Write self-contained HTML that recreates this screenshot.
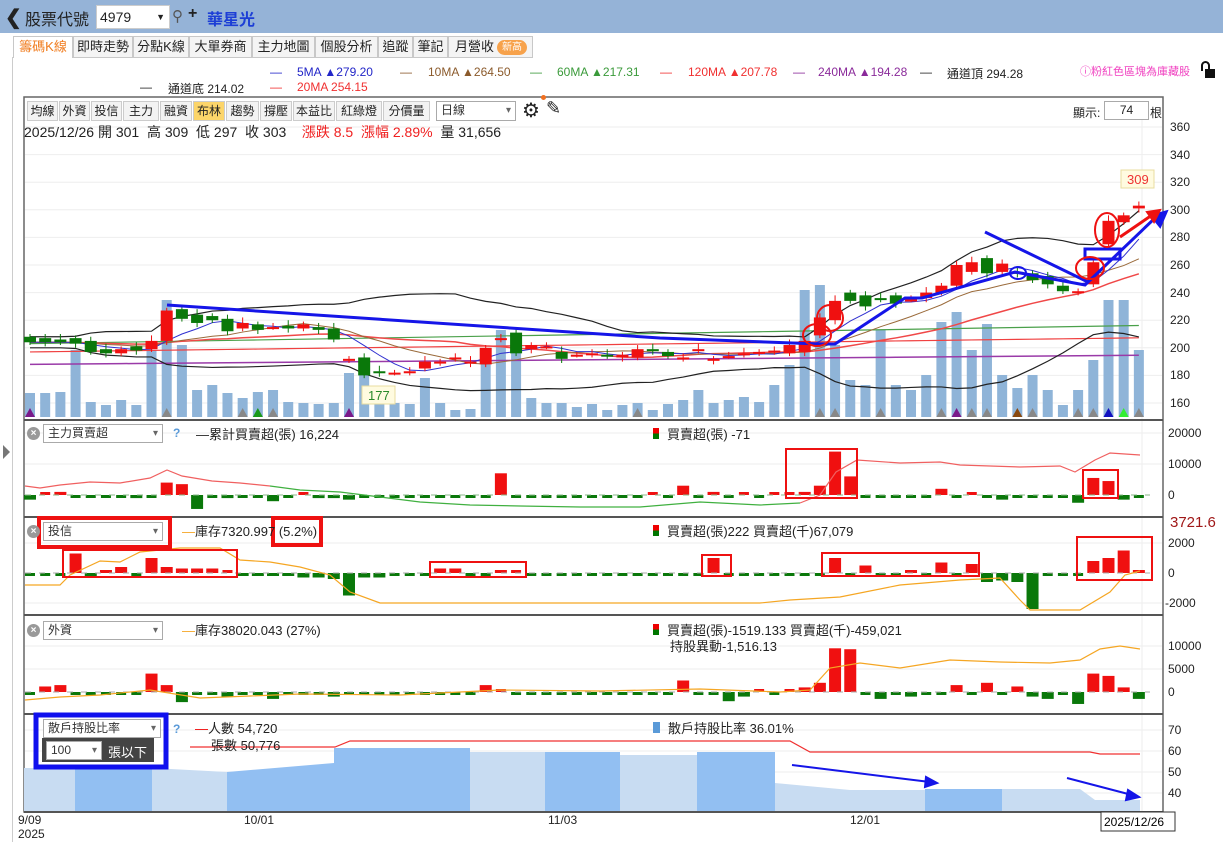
<!DOCTYPE html>
<html><head><meta charset="utf-8">
<style>
*{margin:0;padding:0;box-sizing:border-box}
body{width:1223px;height:842px;overflow:hidden;background:#fff;font-family:"Liberation Sans","Noto Sans CJK TC",sans-serif;font-size:12px;color:#222;position:relative}
.a{position:absolute;white-space:nowrap}
#hdr{position:absolute;left:0;top:0;width:1223px;height:33px;background:#95b3d7}
.tab{position:absolute;top:36px;height:22px;border:1px solid #c8c8c8;background:#f4f4f4;font-size:13px;line-height:20px;text-align:center;color:#222}
.btn{position:absolute;top:101px;height:20px;border:1px solid #ccc;background:#f3f3f3;font-size:12px;line-height:18px;text-align:center}
.sel{position:absolute;height:19px;border:1px solid #aaa;background:#fff;font-size:12px;line-height:17px;padding-left:4px;color:#333}
.sel:after{content:"▾";position:absolute;right:4px;top:0;font-size:10px;color:#666}
.xc{position:absolute;width:13px;height:13px;border-radius:50%;background:#999;color:#fff;font-size:10px;line-height:13px;text-align:center;font-weight:bold}
</style></head><body>
<div id="hdr"></div>
<div class="a" style="left:5px;top:5px;font-size:20px;font-weight:bold;color:#222">&#10094;</div>
<div class="a" style="left:25px;top:6px;font-size:16px;color:#222">股票代號</div>
<div class="a" style="left:96px;top:5px;width:74px;height:24px;background:#fff;border:1px solid #ccc;font-size:14px;line-height:22px;padding-left:3px">4979<span style="position:absolute;right:4px;font-size:9px">▼</span></div>
<div class="a" style="left:172px;top:7px;font-size:15px;color:#555">&#9906;</div>
<div class="a" style="left:188px;top:5px;font-size:16px;font-weight:bold">+</div>
<div class="a" style="left:207px;top:6px;font-size:16px;font-weight:bold;color:#1d3fd6">華星光</div>

<div class="tab" style="left:13px;width:60px;background:#fff;color:#f07b1c;border-bottom:none">籌碼K線</div>
<div class="tab" style="left:73px;width:60px">即時走勢</div>
<div class="tab" style="left:133px;width:56px">分點K線</div>
<div class="tab" style="left:189px;width:63px">大單券商</div>
<div class="tab" style="left:252px;width:63px">主力地圖</div>
<div class="tab" style="left:315px;width:63px">個股分析</div>
<div class="tab" style="left:378px;width:35px">追蹤</div>
<div class="tab" style="left:413px;width:35px">筆記</div>
<div class="tab" style="left:448px;width:85px;text-align:left;padding-left:6px">月營收<span style="display:inline-block;margin-left:3px;background:#f7a24b;color:#fff;border-radius:8px;font-size:10px;line-height:15px;padding:0 5px;vertical-align:1px">新高</span></div>
<div class="a" style="left:12px;top:57px;width:1px;height:785px;background:#ccc"></div>
<div class="a" style="left:3px;top:445px;width:0;height:0;border-left:7px solid #777;border-top:7px solid transparent;border-bottom:7px solid transparent"></div>

<div class="a" style="left:270px;top:65px;color:#2226c8">—</div><div class="a" style="left:297px;top:65px;color:#2226c8">5MA ▲279.20</div>
<div class="a" style="left:400px;top:65px;color:#8b5a2b">—</div><div class="a" style="left:428px;top:65px;color:#8b5a2b">10MA ▲264.50</div>
<div class="a" style="left:530px;top:65px;color:#3a9a3a">—</div><div class="a" style="left:557px;top:65px;color:#3a9a3a">60MA ▲217.31</div>
<div class="a" style="left:660px;top:65px;color:#f03030">—</div><div class="a" style="left:688px;top:65px;color:#f03030">120MA ▲207.78</div>
<div class="a" style="left:793px;top:65px;color:#8a2a9a">—</div><div class="a" style="left:818px;top:65px;color:#8a2a9a">240MA ▲194.28</div>
<div class="a" style="left:920px;top:65px">—</div><div class="a" style="left:947px;top:65px">通道頂 294.28</div>
<div class="a" style="left:140px;top:80px">—</div><div class="a" style="left:168px;top:80px">通道底 214.02</div>
<div class="a" style="left:270px;top:80px;color:#f03030">—</div><div class="a" style="left:297px;top:80px;color:#f03030">20MA 254.15</div>
<div class="a" style="left:1080px;top:63px;color:#f040c0;font-size:11px">ⓘ粉紅色區塊為庫藏股</div>
<div class="a" style="left:1205px;top:69px;width:10px;height:9px;background:#111"></div>
<div class="a" style="left:1201px;top:61px;width:9px;height:10px;border:2px solid #111;border-bottom:none;border-radius:5px 5px 0 0"></div>

<svg class="a" style="left:0;top:0" width="1223" height="842" id="sv">
<rect x="24" y="97" width="1139" height="715" fill="none" stroke="#666" stroke-width="1.5"/>
<g id="grid" stroke="#eee" stroke-width="1"></g>
<g id="p4a"></g>
<g id="main"></g>
<g stroke="#555" stroke-width="2"><line x1="24" y1="420" x2="1163" y2="420"/><line x1="24" y1="517" x2="1163" y2="517"/><line x1="24" y1="615" x2="1163" y2="615"/><line x1="24" y1="714" x2="1163" y2="714"/><line x1="24" y1="812" x2="1163" y2="812"/></g>
<g fill="none" stroke="#1515e8" stroke-width="3">
<polyline points="167,305 660,338 820,344 835,344 905,298 922,298 1015,272 1085,285 1155,218"/>
<line x1="985" y1="232" x2="1088" y2="282"/>
<rect x="1085" y="249" width="35" height="10"/>
<ellipse cx="1018" cy="273" rx="8" ry="6" stroke-width="2"/>
<polygon points="1166,212 1152,216 1160,226" fill="#1515e8"/>
</g>
<g fill="none" stroke="#ee1111" stroke-width="2">
<ellipse cx="817" cy="335" rx="14" ry="11"/><ellipse cx="830" cy="318" rx="13" ry="13"/>
<ellipse cx="1107" cy="230" rx="12" ry="17"/><ellipse cx="1090" cy="268" rx="14" ry="11"/>
<line x1="1120" y1="237" x2="1155" y2="213" stroke-width="3"/><polygon points="1160,210 1147,212 1154,222" fill="#ee1111"/>
</g>
<g fill="none" stroke="#ee1111" stroke-width="2">
<rect x="786" y="449" width="71" height="49"/><rect x="1083" y="470" width="35" height="28"/>
<rect x="39" y="518" width="131" height="29" stroke-width="4"/><rect x="273" y="518" width="48" height="27" stroke-width="4"/>
<rect x="63" y="550" width="174" height="27"/><rect x="430" y="562" width="96" height="15"/><rect x="702" y="555" width="29" height="21"/>
<rect x="822" y="553" width="157" height="23"/><rect x="1077" y="537" width="75" height="43"/>
</g>
<g stroke="#1515e8" stroke-width="2" fill="#1515e8"><line x1="792" y1="765" x2="930" y2="782"/><polygon points="937,783 926,777 925,787"/><line x1="1067" y1="778" x2="1132" y2="795"/><polygon points="1139,797 1128,790 1126,800"/></g>
<rect x="36" y="715" width="130" height="52" fill="none" stroke="#1010ee" stroke-width="5"/>
<rect x="1121" y="170" width="33" height="18" fill="#fffbe0" stroke="#e8dca0"/><text x="1127" y="184" fill="#e33" font-size="13" font-family="Liberation Sans">309</text>
<rect x="362" y="386" width="33" height="18" fill="#fffbe0" stroke="#e8dca0"/><text x="368" y="400" fill="#2a8a2a" font-size="13" font-family="Liberation Sans">177</text>
<g font-family="Liberation Sans" font-size="12" fill="#222" id="ax">
<text x="1170" y="131">360</text><text x="1170" y="159">340</text><text x="1170" y="186">320</text><text x="1170" y="214">300</text><text x="1170" y="241">280</text><text x="1170" y="269">260</text><text x="1170" y="297">240</text><text x="1170" y="324">220</text><text x="1170" y="352">200</text><text x="1170" y="379">180</text><text x="1170" y="407">160</text>
<text x="1168" y="437">20000</text><text x="1168" y="468">10000</text><text x="1168" y="499">0</text>
<text x="1168" y="547">2000</text><text x="1168" y="577">0</text><text x="1165" y="607">-2000</text>
<text x="1168" y="650">10000</text><text x="1168" y="673">5000</text><text x="1168" y="696">0</text>
<text x="1168" y="734">70</text><text x="1168" y="755">60</text><text x="1168" y="776">50</text><text x="1168" y="797">40</text>
<text x="1170" y="527" font-size="15" fill="#a01818">3721.6</text>
<text x="18" y="824">9/09</text><text x="18" y="838">2025</text><text x="244" y="824">10/01</text><text x="548" y="824">11/03</text><text x="850" y="824">12/01</text>
</g>
<rect x="1101" y="812" width="74" height="19" fill="#fff" stroke="#333"/><text x="1104" y="826" font-family="Liberation Sans" font-size="12">2025/12/26</text>
</svg>

<div class="btn" style="left:27px;width:31px">均線</div><div class="btn" style="left:59px;width:31px">外資</div><div class="btn" style="left:91px;width:31px">投信</div><div class="btn" style="left:123px;width:36px">主力</div><div class="btn" style="left:160px;width:32px">融資</div><div class="btn" style="left:193px;width:32px;background:#fcd56a">布林</div><div class="btn" style="left:226px;width:33px">趨勢</div><div class="btn" style="left:260px;width:32px">撐壓</div><div class="btn" style="left:293px;width:42px">本益比</div><div class="btn" style="left:336px;width:46px">紅綠燈</div><div class="btn" style="left:383px;width:47px">分價量</div>
<div class="sel" style="left:436px;top:101px;width:80px;height:20px">日線</div>
<div class="a" style="left:522px;top:98px;font-size:20px">⚙</div><div class="a" style="left:541px;top:95px;width:5px;height:5px;border-radius:50%;background:#f07020"></div>
<div class="a" style="left:546px;top:98px;font-size:18px">✎</div>
<div class="a" style="left:1073px;top:104px">顯示:</div>
<div class="a" style="left:1104px;top:101px;width:45px;height:19px;border:1px solid #aaa;text-align:center;line-height:17px">74</div>
<div class="a" style="left:1150px;top:104px">根</div>
<div class="a" style="left:24px;top:122px;font-size:14px">2025/12/26 開 301&nbsp; 高 309&nbsp; 低 297&nbsp; 收 303&nbsp;&nbsp;&nbsp; <span style="color:#f02020">漲跌 8.5&nbsp; 漲幅 2.89%</span>&nbsp; 量 31,656</div>

<div class="xc" style="left:27px;top:427px">×</div><div class="sel" style="left:43px;top:424px;width:120px">主力買賣超</div>
<div class="a" style="left:173px;top:426px;color:#5a9ad8;font-weight:bold">?</div>
<div class="a" style="left:196px;top:424px;font-size:13px">—累計買賣超(張) 16,224</div>
<div class="a" style="left:653px;top:424px;font-size:13px"><span style="display:inline-block;width:6px;height:11px;background:linear-gradient(#e00 50%,#070 50%);margin-right:8px"></span>買賣超(張) -71</div>

<div class="xc" style="left:27px;top:525px">×</div><div class="sel" style="left:43px;top:522px;width:120px">投信</div>
<div class="a" style="left:182px;top:521px;font-size:13px"><span style="color:#f5a623">—</span>庫存7320.997 (5.2%)</div>
<div class="a" style="left:653px;top:521px;font-size:13px"><span style="display:inline-block;width:6px;height:11px;background:linear-gradient(#e00 50%,#070 50%);margin-right:8px"></span>買賣超(張)222 買賣超(千)67,079</div>

<div class="xc" style="left:27px;top:624px">×</div><div class="sel" style="left:43px;top:621px;width:120px">外資</div>
<div class="a" style="left:182px;top:620px;font-size:13px"><span style="color:#f5a623">—</span>庫存38020.043 (27%)</div>
<div class="a" style="left:653px;top:620px;font-size:13px"><span style="display:inline-block;width:6px;height:11px;background:linear-gradient(#e00 50%,#070 50%);margin-right:8px"></span>買賣超(張)-1519.133 買賣超(千)-459,021</div>
<div class="a" style="left:670px;top:636px;font-size:13px">持股異動-1,516.13</div>

<div class="sel" style="left:43px;top:719px;width:118px">散戶持股比率</div>
<div class="a" style="left:42px;top:738px;width:112px;height:24px;background:#444"></div>
<div class="sel" style="left:46px;top:741px;width:56px">100</div>
<div class="a" style="left:108px;top:742px;color:#fff;font-size:13px">張以下</div>
<div class="a" style="left:173px;top:722px;color:#5a9ad8;font-weight:bold">?</div>
<div class="a" style="left:195px;top:718px;font-size:13px"><span style="color:#e00">—</span>人數 54,720</div>
<div class="a" style="left:211px;top:735px;font-size:13px">張數 50,776</div>
<div class="a" style="left:653px;top:718px;font-size:13px"><span style="display:inline-block;width:7px;height:11px;background:#5a9ad8;margin-right:8px"></span>散戶持股比率 36.01%</div>

<script>
var NS="http://www.w3.org/2000/svg";
function el(p,t,a){var e=document.createElementNS(NS,t);for(var k in a)e.setAttribute(k,a[k]);p.appendChild(e);return e}
var g=document.getElementById('main'),gr=document.getElementById('grid'),p4=document.getElementById('p4a');
function X(i){return 30+i*15.19}
function Y(p){return 127+(360-p)*1.38}
[360,340,320,300,280,260,240,220,200,180,160].forEach(function(p){el(gr,'line',{x1:25,x2:1162,y1:Y(p),y2:Y(p)})});
[433,464,543,603,646,669,730,751,772,793].forEach(function(y){el(gr,'line',{x1:25,x2:1162,y1:y,y2:y})});
el(gr,'line',{x1:1142,x2:1142,y1:120,y2:812});
var D=[[208,204],[207,204],[206,204],[207,203],[205,197],[199,196],[196,199],[201,198],[199,205],[205,227],[228,221],[224,218],[223,220],[221,212],[214,218],[217,213],[215,215],[216,214],[214,217],[215,213],[214,206],[192,192],[193,180],[183,182],[182,182],[183,183],[185,190],[190,190],[192,193],[189,190],[188,200],[207,207],[211,196],[199,202],[201,201],[197,192],[195,195],[196,196],[195,194],[193,195],[193,199],[199,198],[197,194],[193,193],[198,199],[191,192],[194,194],[196,196],[196,197],[198,198],[196,202],[197,205],[209,222],[220,234],[240,234],[238,230],[236,235],[238,232],[235,235],[236,240],[240,245],[245,260],[255,262],[265,254],[255,261],[255,254],[254,249],[252,246],[245,241],[241,241],[246,262],[275,292],[291,296],[301,303]];
var V=[393,393,392,350,402,405,400,405,350,300,345,390,385,393,398,392,390,402,403,404,403,373,372,404,403,404,378,403,410,409,350,330,345,398,403,403,407,404,410,405,403,410,404,400,390,403,400,397,402,385,365,290,285,345,380,385,330,385,390,375,322,312,350,324,375,388,375,390,405,390,360,300,300,350];
V.forEach(function(v,i){el(g,'rect',{x:X(i)-5,y:v,width:10,height:417-v,fill:'#8fb4d8'})});
var tri={0:'#7a1a8a',9:'#888',21:'#7a1a8a',14:'#888',16:'#888',15:'#1a9a1a',40:'#888',52:'#888',53:'#888',56:'#888',61:'#7a1a8a',62:'#888',63:'#888',65:'#8a4a10',66:'#888',70:'#888',71:'#1010c0',72:'#33ee33',73:'#888',69:'#888',60:'#888'};
for(var k in tri){var x=X(+k);el(g,'polygon',{points:(x-5)+',417 '+(x+5)+',417 '+x+',408',fill:tri[k]})}
var C=D.map(function(d){return d[1]});
function ma(n,off){return C.map(function(c,i){var s=0,m=0;for(var j=i-n+1;j<=i;j++){s+=C[Math.max(0,j)];m++}return s/m+(off||0)})}
function line(arr,col,w,yf){el(g,'polyline',{points:arr.map(function(v,i){return X(i)+','+(yf?yf(v):Y(v))}).join(' '),fill:'none',stroke:col,'stroke-width':w||1})}
var m20=ma(20),sd=C.map(function(c,i){var s=0,n=0;for(var j=i-19;j<=i;j++){var d=C[Math.max(0,j)]-m20[i];s+=d*d;n++}return Math.sqrt(s/n)});
line(C.map(function(c,i){return 203+i*0.18}),'#4aa04a',1.2);
line(C.map(function(c,i){return 197+i*0.14}),'#f04040',1.2);
line(C.map(function(c,i){return 188+i*0.09}),'#9a3aa8',1.5);
line(m20.map(function(m,i){return m+2*sd[i]+4}),'#222',1.2);
line(m20.map(function(m,i){return m-2*sd[i]-4}),'#222',1.2);
line(m20,'#f04848',1.5);line(ma(10),'#9a6a3a',1);line(ma(5),'#3030d0',1);
D.forEach(function(d,i){var o=d[0],c=d[1],up=c>=o,col=up?'#f01010':'#0a780a',x=X(i);var hi=Math.max(o,c)+2+(i%3),lo=Math.min(o,c)-2-(i%2);
el(g,'line',{x1:x,x2:x,y1:Y(hi),y2:Y(lo),stroke:col});var t=Y(Math.max(o,c)),h=Math.max(2,Y(Math.min(o,c))-t);el(g,'rect',{x:x-6,y:t,width:12,height:h,fill:col})});
function bars(vals,y0,sc){vals.forEach(function(v,i){if(i>73)return;var h=v*sc,x=X(i);if(Math.abs(h)<3){el(g,'rect',{x:x-5,y:y0-(v>0?3:0),width:10,height:3,fill:v>0?'#f01010':'#0a780a'})}else el(g,'rect',{x:x-6,y:v>0?y0-h:y0,width:12,height:Math.abs(h),fill:v>0?'#f01010':'#0a780a'})})}
var P1=[-1.5,0.5,1,0,-0.5,-0.5,-0.5,-1,0,4,3.5,-4.5,-0.5,-1,-0.5,-0.5,-2,-0.5,0.5,-1,-1,-1.5,0,-0.5,-0.5,-0.5,-0.5,-0.5,-0.5,-0.5,-0.5,7,0,-0.5,-0.5,-0.5,-0.5,-0.5,-0.5,-0.5,-0.5,0.5,-0.5,3,-0.5,1,-0.5,0.3,-0.5,0.5,0.5,1,3,14,6,-0.5,-0.5,-0.5,-0.5,-0.5,2,-0.5,0.5,-0.5,-1.5,-0.5,-0.5,-0.5,-0.5,-2.5,5.5,4.5,-1.5,-0.2];
bars(P1,495,3.1);
var P2=[0,0,0,1.3,-0.2,0.2,0.4,-0.1,1.0,0.4,0.3,0.3,0.3,0.1,-0.2,-0.2,-0.2,-0.2,-0.3,-0.3,-0.4,-1.5,-0.3,-0.3,0,0,0,0.3,0.3,0,0,0.2,0.1,0,0,0,-0.1,0,0,0,0,0,0,0,0,1.0,0,0,0,0,0,0,0,1.0,0,0.5,0,0,0.2,0,0.7,0,0.6,-0.6,-0.5,-0.6,-2.4,0,0,0,0.8,1.0,1.5,0.2];
bars(P2,573,15);
var P3=[-0.5,1.2,1.5,-0.5,-0.5,-0.5,-0.5,-0.5,4,1.5,-2.2,-0.5,-0.5,-1,-0.5,-0.5,-1.5,-0.5,-0.5,-0.5,-1,-0.5,-0.5,-0.5,-0.5,-0.5,-0.5,-0.5,-0.5,-0.5,1.5,0.5,-0.5,-0.5,-0.5,-0.5,-0.5,-0.5,-0.5,-0.5,-0.5,-0.5,-0.5,2.5,-0.5,-0.5,-2,-1,0.5,-0.5,0.5,1,2,9.5,9.3,-0.5,-1.5,-0.5,-1,-0.5,-0.5,1.5,-0.5,2,-0.5,1.2,-1,-1.5,-0.5,-2.6,4,3.5,1,-1.5];
bars(P3,692,4.6);
el(g,'line',{x1:25,x2:1150,y1:495,y2:495,stroke:'#8ab88a','stroke-dasharray':'6,8'});
el(g,'line',{x1:25,x2:1150,y1:573,y2:573,stroke:'#aaa','stroke-dasharray':'6,8'});
el(g,'line',{x1:25,x2:1150,y1:692,y2:692,stroke:'#aaa','stroke-dasharray':'6,8'});
function pl(pts,col,w){el(g,'polyline',{points:pts,fill:'none',stroke:col,'stroke-width':w||1.2})}
pl('25,486 40,488 60,485 90,482 120,483 150,478 167,470 182,476 212,481 240,483 270,486','#f06060');
pl('270,486 300,490 340,492 380,497 420,502 470,505 520,506 580,507 640,507 700,502 760,505 800,503','#40b040');
pl('800,503 820,495 836,472 857,460 900,463 940,462 960,465 990,466 1020,467 1060,466 1075,472 1095,460 1110,453 1140,455','#f06060');
pl('25,585 60,585 70,575 100,561 120,562 140,552 180,548 220,548 240,560 270,562 300,567 330,575 350,592 380,603 700,603 760,603 790,600 840,597 900,585 960,580 1000,578 1020,600 1030,610 1080,610 1110,592 1125,575 1140,571','#f5a623');
pl('25,700 60,697 100,695 150,690 200,698 250,696 300,694 400,695 500,690 600,691 700,689 780,692 810,690 830,668 860,663 900,668 950,660 1000,662 1050,663 1080,660 1100,649 1120,646 1140,649','#f5a623');
var L='#c8dcf2',M='#92bff2';
[[24,75,768,768,L],[75,152,768,768,M],[152,227,768,772,L],[227,334,772,763,M],[334,470,748,748,M],[470,545,752,752,L],[545,620,752,752,M],[620,697,755,755,L],[697,775,752,752,M],[775,850,783,790,L],[850,925,790,790,L],[925,1002,789,789,M],[1002,1080,789,789,L],[1080,1095,789,800,L],[1095,1140,800,800,L]].forEach(function(b){el(p4,'polygon',{points:b[0]+',812 '+b[0]+','+b[2]+' '+b[1]+','+b[3]+' '+b[1]+',812',fill:b[4]})});
pl('190,747 335,747 350,741 790,741 810,752 1090,752 1100,754 1140,754','#f03030');
</script>
</body></html>
